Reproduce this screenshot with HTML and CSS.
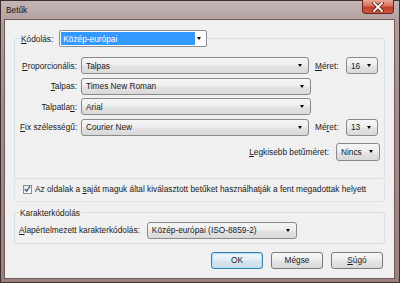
FILE: index.html
```html
<!DOCTYPE html>
<html>
<head>
<meta charset="UTF-8">
<title>Betűk</title>
<link rel="stylesheet" href="styles.css">
</head>
<body>
<div id="window">
    <div id="titlebar">
        <span id="title">Betűk</span>
        <div id="btn-close">
            <svg width="12" height="10" viewBox="0 0 12 10">
                <path d="M2 1 L10 9 M10 1 L2 9" stroke="#5a1a12" stroke-width="3.4" stroke-linecap="square"/>
                <path d="M2 1 L10 9 M10 1 L2 9" stroke="#ffffff" stroke-width="1.8" stroke-linecap="square"/>
            </svg>
        </div>
    </div>

    <div id="client">
        <fieldset id="font-group" class="group">
            <legend id="encoding-legend">
                <div class="legend-row">
                    <span class="label"><u>K</u>ódolás:</span>
                    <div class="combo edit">
                        <span class="selected">Közép-európai</span>
                        <span class="arrow"></span>
                    </div>
                </div>
            </legend>

            <div id="font-grid">
                <span class="label right"><u>P</u>roporcionális:</span>
                <div class="combo"><span>Talpas</span><span class="arrow"></span></div>
                <span class="label"><u>M</u>éret:</span>
                <div class="combo"><span>16</span><span class="arrow"></span></div>

                <span class="label right"><u>T</u>alpas:</span>
                <div class="combo"><span>Times New Roman</span><span class="arrow"></span></div>
                <span></span>
                <span></span>

                <span class="label right">Talpatla<u>n</u>:</span>
                <div class="combo"><span>Arial</span><span class="arrow"></span></div>
                <span></span>
                <span></span>

                <span class="label right"><u>F</u>ix szélességű:</span>
                <div class="combo"><span>Courier New</span><span class="arrow"></span></div>
                <span class="label">Mé<u>r</u>et:</span>
                <div class="combo"><span>13</span><span class="arrow"></span></div>
            </div>

            <div id="min-size-row">
                <span class="label"><u>L</u>egkisebb betűméret:</span>
                <div class="combo" id="min-size"><span>Nincs</span><span class="arrow"></span></div>
            </div>
        </fieldset>

        <div id="check-area">
            <span class="checkbox">
                <svg width="8" height="8" viewBox="0 0 8 8">
                    <path d="M1 4 L3 6.5 L7 0.8" fill="none" stroke="#3b4f8c" stroke-width="1.4"/>
                </svg>
            </span>
            <span class="label">Az oldalak a <u>s</u>aját maguk által kiválasztott betűket használhatják a fent megadottak helyett</span>
        </div>

        <fieldset id="charset-group" class="group">
            <legend>Karakterkódolás</legend>
            <div class="charset-row">
                <span class="label"><u>A</u>lapértelmezett karakterkódolás:</span>
                <div class="combo" id="charset"><span>Közép-európai (ISO-8859-2)</span><span class="arrow"></span></div>
            </div>
        </fieldset>

        <div id="buttons">
            <div class="button default">OK</div>
            <div class="button">Mégse</div>
            <div class="button"><u>S</u>úgó</div>
        </div>
    </div>
</div>
</body>
</html>
```

FILE: styles.css
```css
body {
    margin: 0;
    font-family: "Liberation Sans", Arial, sans-serif;
    font-size: 8.3px;
    line-height: 10px;
    color: #1a1a1a;
    background-color: #9c8686;
}

u {
    text-decoration-thickness: 1px;
    text-underline-offset: 1px;
}

#window {
    width: 400px;
    height: 283px;
    box-sizing: border-box;
    border: 1px solid #3e2e2e;
    background: linear-gradient(180deg, #c4b5b5 0%, #b09d9d 8%, #a38c8c 40%, #9a8282 100%);
}

#titlebar {
    height: 19px;
    display: flex;
    justify-content: space-between;
    align-items: flex-start;
}

#title {
    padding: 4px 0 0 5px;
    color: #1a1010;
}

#btn-close {
    width: 32px;
    height: 14px;
    margin: -1px 5px 0 0;
    box-sizing: border-box;
    border: 1px solid #6a261c;
    border-top: none;
    border-radius: 0 0 4px 4px;
    background: linear-gradient(180deg, #e8a896 0%, #d7725e 45%, #c4402a 55%, #d0553c 100%);
    display: flex;
    justify-content: center;
    align-items: center;
}

#client {
    width: 389px;
    height: 258px;
    margin-left: 4px;
    box-sizing: border-box;
    padding: 10px 9px 0 9px;
    background-color: #f0f0f0;
    box-shadow: 0 0 0 1px #6e5959;
}

.group {
    margin: 0;
    border: 1px solid #d8dde2;
    border-radius: 3px;
    min-width: 0;
}

#font-group {
    padding: 10px 4px 17px 5px;
}

#encoding-legend {
    padding: 0 2px 0 1px;
}

.legend-row {
    display: flex;
    align-items: center;
    gap: 6px;
}

.combo {
    height: 17px;
    box-sizing: border-box;
    border: 1px solid #8a8a8a;
    border-radius: 3px;
    background: linear-gradient(180deg, #f6f6f6 0%, #eeeeee 45%, #e3e3e3 55%, #d9d9d9 100%);
    display: flex;
    align-items: center;
    justify-content: space-between;
    padding: 0 6px 0 4px;
    white-space: nowrap;
}

.arrow {
    width: 0;
    height: 0;
    border-left: 2.5px solid transparent;
    border-right: 2.5px solid transparent;
    border-top: 3px solid #000000;
}

.combo.edit {
    width: 148px;
    background: #ffffff;
    border: 1px solid #8d8f96;
    border-radius: 2px;
    padding: 1px 5px 1px 1px;
    align-items: stretch;
}

.combo.edit .selected {
    width: 132px;
    background-color: #3399ff;
    color: #ffffff;
    padding-left: 2px;
    display: flex;
    align-items: center;
}

.combo.edit .arrow {
    align-self: center;
}

#font-grid {
    display: grid;
    grid-template-columns: 57px 230px 27px 32px;
    grid-auto-rows: 17px;
    column-gap: 4px;
    row-gap: 3.5px;
    align-items: center;
}

#font-grid .combo:nth-child(2),
#font-grid .combo:nth-child(14) {
    margin-right: 2px;
}

.label.right {
    text-align: right;
    white-space: nowrap;
}

#min-size-row {
    display: flex;
    justify-content: flex-end;
    align-items: center;
    gap: 7px;
    margin-top: 7px;
}

#min-size {
    width: 44px;
    height: 18px;
}

#check-area {
    height: 23px;
    box-sizing: border-box;
    border: 1px solid #dfe3e7;
    border-top: none;
    border-radius: 0 0 3px 3px;
    display: flex;
    align-items: center;
    gap: 3px;
    padding: 0 0 1px 8px;
}

.checkbox {
    width: 9px;
    height: 9px;
    box-sizing: border-box;
    border: 1px solid #8e8f8f;
    background: linear-gradient(135deg, #e8e8e8, #ffffff);
    display: flex;
    align-items: center;
    justify-content: center;
}

#charset-group {
    margin-top: 6px;
    padding: 4px 4px 4px 4px;
}

#charset-group legend {
    padding: 0 1px;
}

.charset-row {
    display: flex;
    align-items: center;
    gap: 7px;
}

#charset {
    width: 150px;
}

#buttons {
    display: flex;
    justify-content: flex-end;
    gap: 8px;
    margin-top: 8px;
    padding-right: 2px;
}

.button {
    width: 52px;
    height: 17px;
    box-sizing: border-box;
    border: 1px solid #7a7a7a;
    border-radius: 3px;
    background: linear-gradient(180deg, #f6f6f6 0%, #eeeeee 45%, #e3e3e3 55%, #d9d9d9 100%);
    display: flex;
    align-items: center;
    justify-content: center;
}

.button.default {
    border-color: #3c7fb1;
    box-shadow: inset 0 0 0 1px #a8e2f8;
    background: linear-gradient(180deg, #f0f6fa 0%, #e4eef4 45%, #d6e4ee 55%, #cddde8 100%);
}
```
